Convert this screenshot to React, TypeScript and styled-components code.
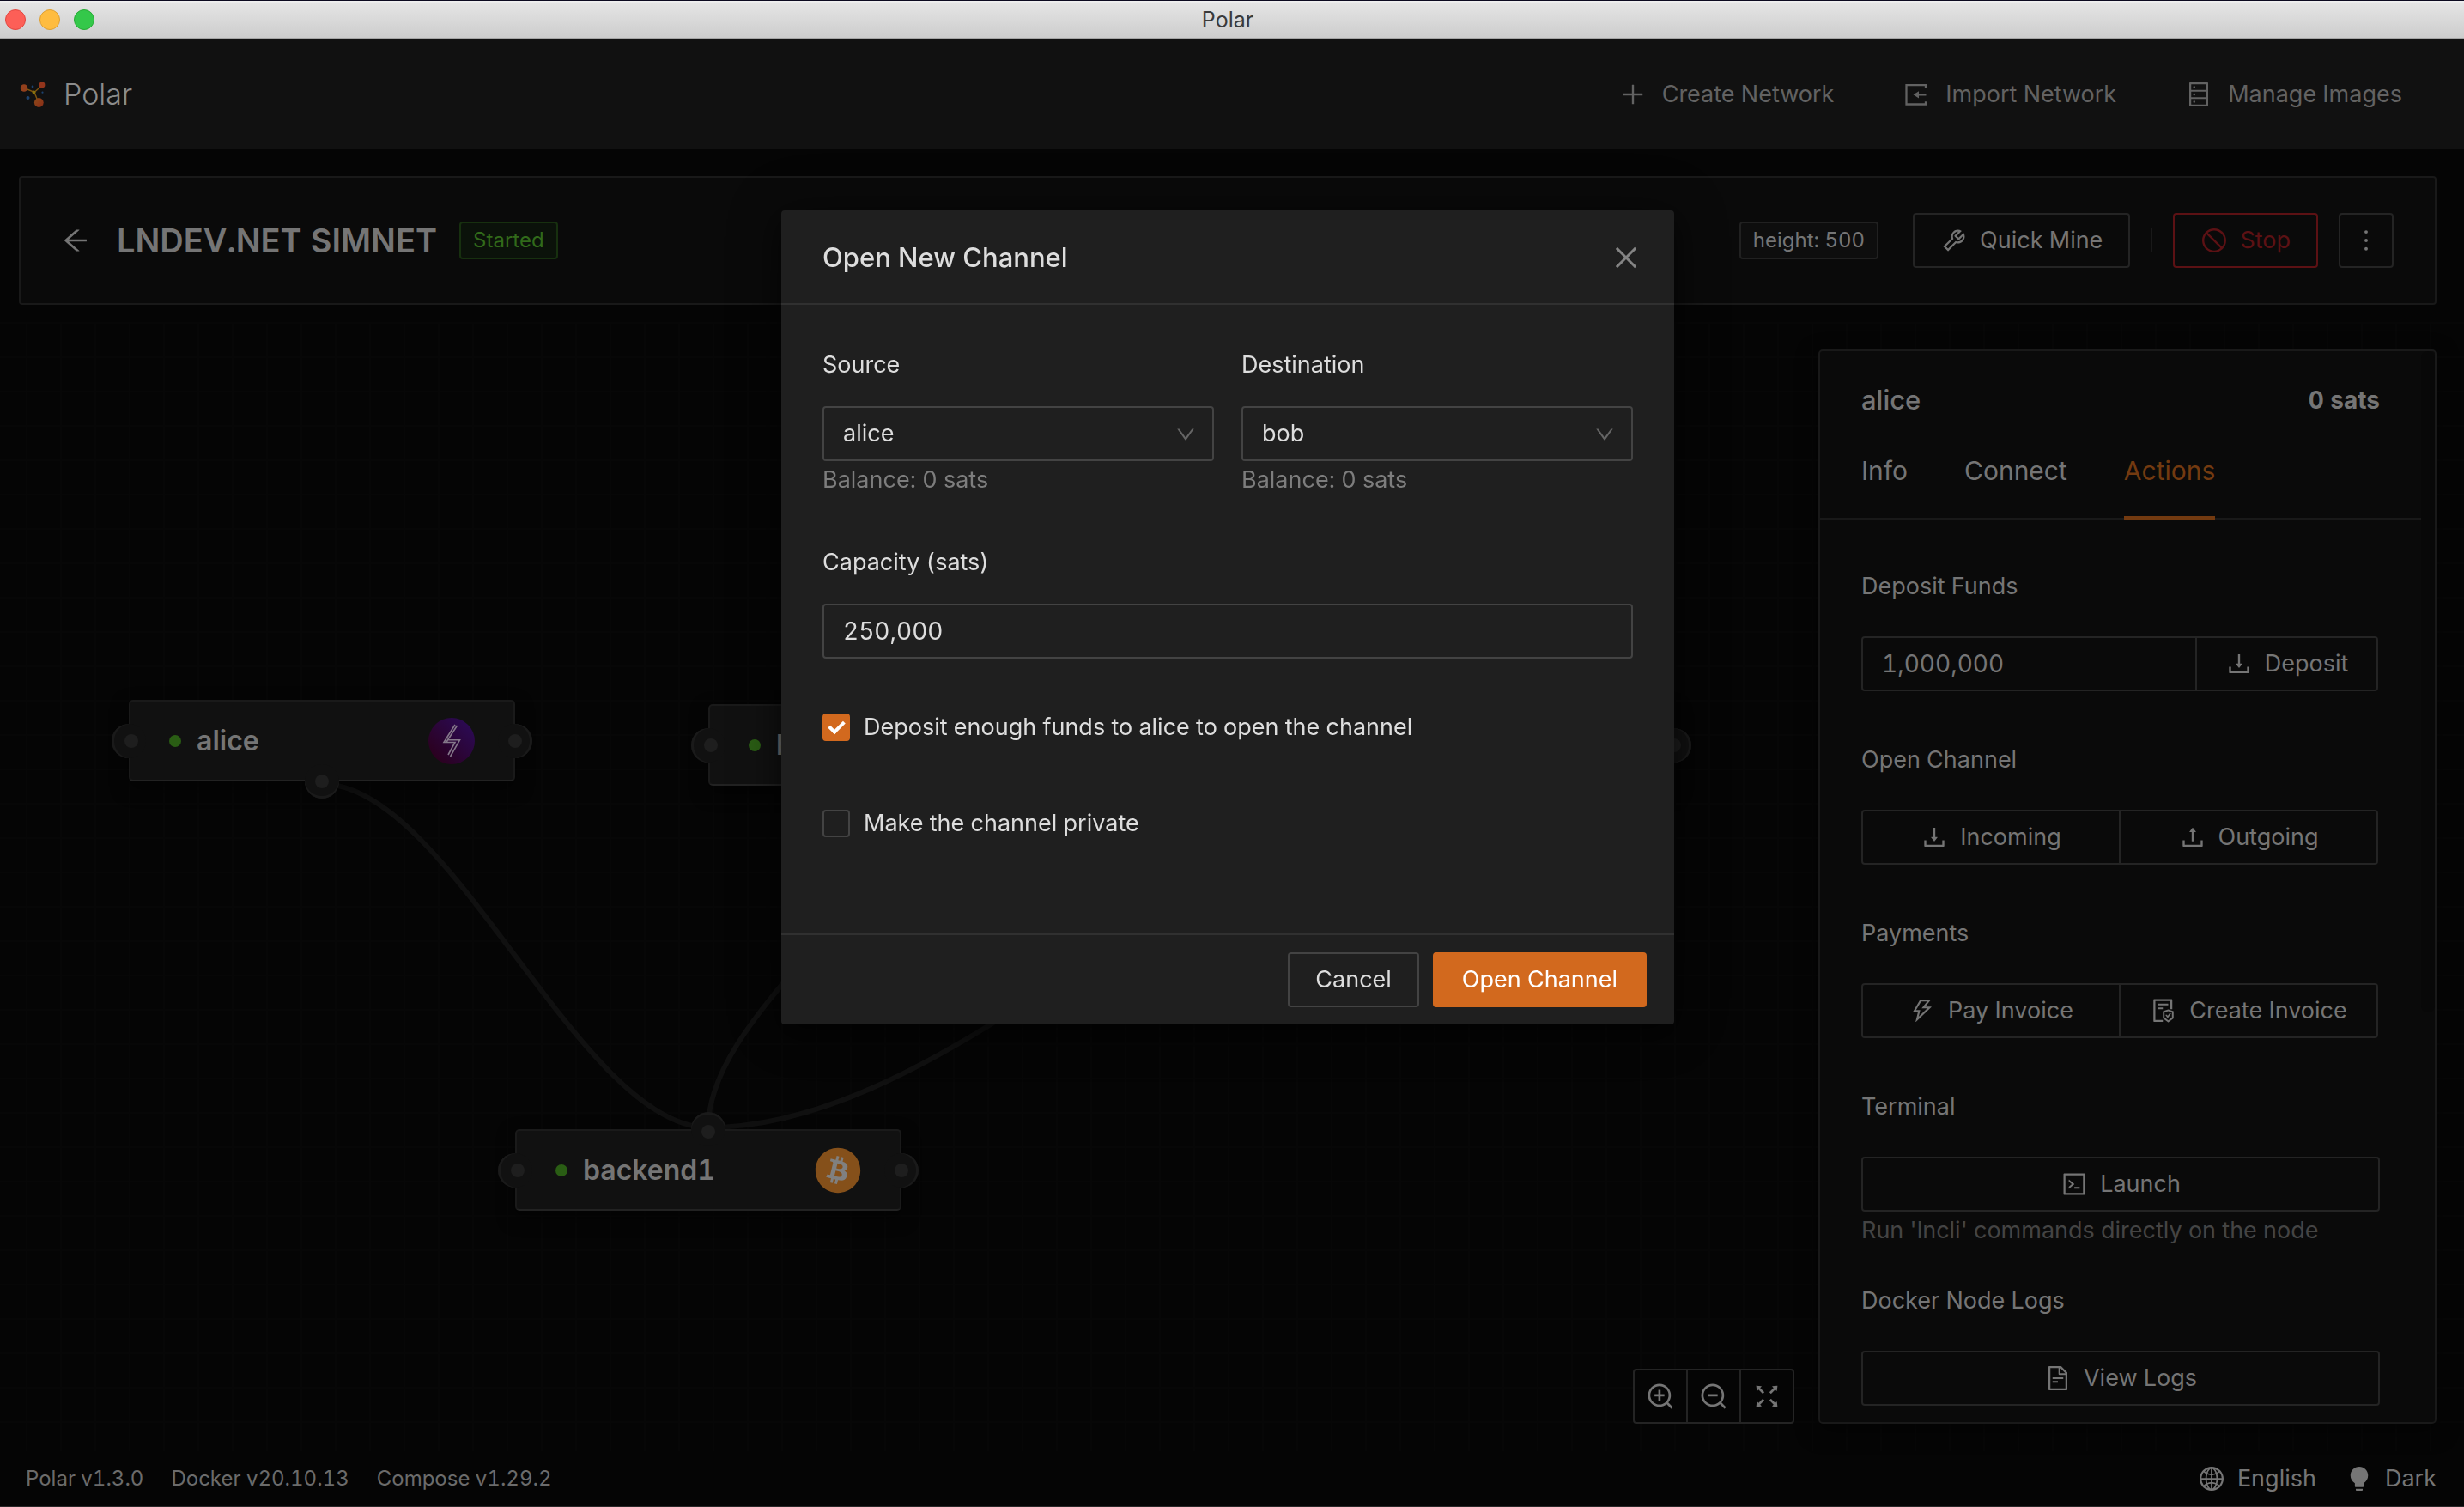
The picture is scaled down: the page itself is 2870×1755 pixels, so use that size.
import React from 'react';
import styled, { createGlobalStyle, css } from 'styled-components';
import {
  AiOutlinePlus, AiOutlineDatabase, AiOutlineArrowLeft, AiOutlineTool,
  AiOutlineStop, AiOutlineMore, AiOutlineDownload, AiOutlineUpload, AiOutlineThunderbolt,
  AiOutlineFileProtect, AiOutlineCode, AiOutlineFileText, AiOutlineZoomIn, AiOutlineZoomOut,
  AiOutlineFullscreen, AiOutlineGlobal, AiFillBulb, AiOutlineClose, AiOutlineDown,
} from 'react-icons/ai';
import { FaBitcoin } from 'react-icons/fa';

const c = {
  page: '#050505',
  bar: '#111111',
  card: '#0a0a0a',
  line: '#191919',
  control: '#242424',
  text: '#757575',
  muted: '#626262',
  faint: '#444444',
  primaryDim: '#733a10',
  primary: '#d2691e',
  danger: '#5c1114',
  modal: '#1f1f1f',
  modalLine: '#303030',
  modalControl: '#434343',
  modalText: '#dddddd',
};

const Global = createGlobalStyle`
  *, *::before, *::after { box-sizing: border-box; }
  body { margin: 0; background: ${c.page}; }
  body, button, input, select {
    font-family: Inter, "Liberation Sans", sans-serif;
    font-size: 27px;
    line-height: 44px;
    font-variant-numeric: tabular-nums;
  }
  h1, h2, h3, p { margin: 0; }
  svg { display: block; flex: none; }
`;

const Window = styled.div`
  display: flex;
  flex-direction: column;
  min-height: 100vh;
  color: ${c.text};
  background: ${c.page};
  border-bottom: 1px solid #2a2829;
`;

const TitleBar = styled.div`
  display: grid;
  grid-template-columns: 1fr auto 1fr;
  align-items: center;
  height: 45px;
  padding: 0 16px 0 6px;
  border-top: 1px solid #0c0a20;
  border-bottom: 1px solid #a5a5a5;
  background: linear-gradient(#f2f2f2, #e4e4e4 3px, #cdcdcd);
  color: #3a3a3a;
  font-size: 25px;
  line-height: 32px;
`;

const Lights = styled.div`
  display: flex;
  gap: 16px;
`;

const Light = styled.span<{ $fill: string; $edge: string }>`
  width: 24px;
  height: 24px;
  border-radius: 50%;
  background: ${p => p.$fill};
  border: 1px solid ${p => p.$edge};
`;

const AppBar = styled.header`
  display: flex;
  align-items: center;
  justify-content: space-between;
  height: 128px;
  padding: 2px 72px 0 22px;
  background: ${c.bar};
`;

const Brand = styled.a`
  display: flex;
  align-items: center;
  gap: 20px;
  color: #8c8c8c;
  font-size: 34px;
  font-weight: 300;
  text-decoration: none;
`;

const Menu = styled.nav`
  display: flex;
  gap: 80px;
`;

const MenuItem = styled.a`
  display: flex;
  align-items: center;
  gap: 18px;
  color: ${c.muted};
  text-decoration: none;
`;

const PageHeader = styled.section`
  display: flex;
  align-items: center;
  justify-content: space-between;
  height: 150px;
  margin: 32px 32px 20px 22px;
  padding: 0 48px 0 46px;
  border: 2px solid ${c.line};
  border-radius: 4px;
  background: ${c.card};
`;

const HeaderSide = styled.div`
  display: flex;
  align-items: center;
`;

const IconButton = styled.button`
  display: flex;
  padding: 0;
  border: 0;
  background: none;
  color: inherit;
`;

const NetworkName = styled.h1`
  margin: 0 26px 0 30px;
  font-size: 38px;
  font-weight: 600;
  line-height: 64px;
`;

const Tag = styled.span<{ $success?: boolean }>`
  padding: 0 14px;
  border: 2px solid ${p => (p.$success ? '#17300f' : '#212121')};
  border-radius: 4px;
  background: ${p => (p.$success ? '#0b120a' : '#0e0e0e')};
  color: ${p => (p.$success ? '#316a1a' : c.text)};
  font-size: 24px;
  line-height: 40px;
`;

const Divider = styled.span`
  width: 2px;
  height: 28px;
  margin: 0 24px;
  background: ${c.line};
`;

const Button = styled.button<{ $tone?: 'danger' | 'modal' | 'primary'; $square?: boolean }>`
  display: flex;
  align-items: center;
  justify-content: center;
  gap: 14px;
  height: 64px;
  padding: 0 30px;
  border: 2px solid ${c.control};
  border-radius: 4px;
  background: transparent;
  color: ${c.text};
  ${p => p.$square && css`
    width: 64px;
    padding: 0;
  `}
  ${p => p.$tone === 'danger' && css`
    border-color: ${c.danger};
    color: ${c.danger};
  `}
  ${p => p.$tone === 'modal' && css`
    border-color: ${c.modalControl};
    color: ${c.modalText};
  `}
  ${p => p.$tone === 'primary' && css`
    padding: 0 32px;
    border-color: ${c.primary};
    background: ${c.primary};
    color: #ffffff;
  `}
`;

const TagSlot = styled.div`
  display: flex;
  margin-right: 40px;
`;

const MoreSlot = styled.div`
  margin-left: 24px;
`;

const Workspace = styled.main`
  display: flex;
  flex: 1;
  background-image:
    linear-gradient(90deg, #070707 2px, transparent 2px),
    linear-gradient(#070707 2px, transparent 2px);
  background-size: 40px 40px;
  background-position: 30px 0;
`;

const Canvas = styled.div`
  position: relative;
  flex: 1;
`;

const Links = styled.svg`
  position: absolute;
  inset: 0;
  overflow: visible;
`;

const NodeCard = styled.div<{ $x: number; $y: number }>`
  position: absolute;
  left: ${p => p.$x}px;
  top: ${p => p.$y}px;
  display: flex;
  align-items: center;
  width: 450px;
  height: 95px;
  padding: 0 45px;
  border: 2px solid #1a1a1a;
  border-bottom-color: #222222;
  border-radius: 5px;
  background: ${c.bar};
  box-shadow: 0 8px 20px rgba(0, 0, 0, 0.5);
  font-size: 32px;
  font-weight: 600;
`;

const StatusDot = styled.span`
  width: 14px;
  height: 14px;
  margin-right: 18px;
  border-radius: 50%;
  background: #2a5d14;
`;

const NodeName = styled.span`
  flex: 1;
`;

const portSides = {
  left: css`left: -22px; top: 26px; padding-left: 6px; box-shadow: inset 3px 0 0 #1a1a1a;`,
  right: css`right: -22px; top: 26px; box-shadow: inset -3px 0 0 #1a1a1a;`,
  top: css`left: 203px; top: -22px; padding-top: 6px; box-shadow: inset 0 3px 0 #1a1a1a;`,
  bottom: css`left: 203px; bottom: -22px; box-shadow: inset 0 -3px 0 #1a1a1a;`,
};

const Port = styled.span<{ $side: keyof typeof portSides }>`
  position: absolute;
  display: grid;
  place-items: center;
  width: 40px;
  height: 40px;
  border-radius: 50%;
  background: ${c.bar};
  ${p => portSides[p.$side]}
  &::after {
    content: '';
    width: 16px;
    height: 16px;
    border-radius: 50%;
    background: #1e1e1e;
  }
`;

const BitcoinBadge = styled.span`
  display: grid;
  width: 54px;
  height: 54px;
  border-radius: 50%;
  background: radial-gradient(#808080 60%, transparent 61%);
  color: #85501a;
`;

const ZoomControls = styled.div`
  position: absolute;
  right: 28px;
  bottom: 32px;
  display: flex;
  background: ${c.page};
`;

const Sidebar = styled.aside`
  display: flex;
  width: 720px;
  margin: 32px 32px 32px 0;
  border: 2px solid ${c.line};
  border-radius: 5px;
  background: ${c.card};
  box-shadow: 0 8px 24px rgba(0, 0, 0, 0.5);
`;

const SidebarContent = styled.div`
  flex: 1;
  padding-top: 35px;
`;

const ScrollThumb = styled.div`
  width: 16px;
  height: 770px;
  border-radius: 8px;
  background: #080808;
`;

const SidebarTop = styled.div`
  display: flex;
  justify-content: space-between;
  padding: 0 48px;
`;

const SidebarTitle = styled.h2`
  font-size: 31px;
  font-weight: 500;
`;

const Balance = styled.strong`
  font-size: 28px;
`;

const Tabs = styled.div`
  display: flex;
  gap: 66px;
  margin-top: 38px;
  padding: 0 48px;
  border-bottom: 2px solid ${c.line};
`;

const Tab = styled.button<{ $active?: boolean }>`
  margin-bottom: -2px;
  padding: 0 0 31px;
  border: 0;
  border-bottom: 4px solid ${p => (p.$active ? c.primaryDim : 'transparent')};
  background: none;
  color: ${p => (p.$active ? c.primaryDim : c.text)};
  font-size: 30px;
`;

const Sections = styled.div`
  display: flex;
  flex-direction: column;
  gap: 58px;
  padding: 56px 48px 0;
`;

const Section = styled.section`
  display: flex;
  flex-direction: column;
`;

const SectionTitle = styled.h3`
  margin-bottom: 36px;
  font-size: 27px;
  font-weight: 400;
`;

const ButtonGroup = styled.div`
  display: flex;
  & > * {
    flex: 1;
  }
  & > * + * {
    margin-left: -2px;
    border-top-left-radius: 0;
    border-bottom-left-radius: 0;
  }
  & > :not(:last-child) {
    border-top-right-radius: 0;
    border-bottom-right-radius: 0;
  }
`;

const ActionGroup = styled(ButtonGroup)`
  margin-right: 2px;
`;

const SplitRow = styled(ActionGroup)`
  & > :last-child {
    flex: none;
    width: 213px;
  }
`;

const ZoomGroup = styled(ButtonGroup)`
  & > * {
    flex: none;
  }
`;

const TextInput = styled.input<{ $modal?: boolean }>`
  width: 100%;
  min-width: 0;
  height: 64px;
  padding: 0 22px;
  border: 2px solid ${p => (p.$modal ? c.modalControl : c.control)};
  border-radius: 4px;
  background: transparent;
  color: ${p => (p.$modal ? c.modalText : c.text)};
  font-size: 28px;
`;

const Hint = styled.p<{ $modal?: boolean }>`
  margin-bottom: ${p => (p.$modal ? 0 : '-20px')};
  color: ${p => (p.$modal ? '#7d7d7d' : c.faint)};
`;

const StatusBar = styled.footer`
  display: flex;
  align-items: center;
  justify-content: space-between;
  height: 64px;
  padding: 0 32px 0 30px;
  color: #6b6b6b;
`;

const Versions = styled.div`
  display: flex;
  gap: 32px;
  font-size: 24px;
`;

const Preferences = styled.div`
  display: flex;
  gap: 34px;
`;

const Preference = styled.button`
  display: flex;
  align-items: center;
  gap: 14px;
  padding: 0;
  border: 0;
  background: none;
  color: ${c.text};
`;

const Overlay = styled.div`
  position: fixed;
  inset: 0;
  display: flex;
  align-items: flex-start;
  justify-content: center;
  padding: 245px 10px 0 0;
`;

const Dialog = styled.form`
  width: 1040px;
  border-radius: 4px;
  background: ${c.modal};
  color: ${c.modalText};
  box-shadow: 0 12px 32px rgba(0, 0, 0, 0.5), 0 0 64px rgba(0, 0, 0, 0.3);
`;

const DialogHeader = styled.div`
  display: flex;
  align-items: center;
  justify-content: space-between;
  padding: 33px 38px 31px 48px;
  border-bottom: 2px solid ${c.modalLine};
`;

const DialogTitle = styled.h2`
  font-size: 31px;
  font-weight: 500;
`;

const CloseButton = styled(IconButton)`
  color: #848484;
`;

const DialogBody = styled.div`
  padding: 48px 48px 106px;
`;

const FieldRow = styled.div`
  display: grid;
  grid-template-columns: 1fr 1fr;
  gap: 32px;
  margin-bottom: 52px;
`;

const Field = styled.div`
  display: flex;
  flex-direction: column;
`;

const FieldLabel = styled.label`
  margin-bottom: 26px;
`;

const SelectBox = styled.div`
  position: relative;
  & > svg {
    position: absolute;
    right: 20px;
    top: 20px;
    color: #656565;
    pointer-events: none;
  }
`;

const Select = styled.select`
  width: 100%;
  height: 64px;
  padding: 0 22px;
  border: 2px solid ${c.modalControl};
  border-radius: 4px;
  appearance: none;
  background: transparent;
  color: ${c.modalText};
`;

const Checks = styled.div`
  display: flex;
  flex-direction: column;
  gap: 68px;
  margin-top: 58px;
`;

const CheckLabel = styled.label`
  display: flex;
  align-items: center;
  gap: 16px;
`;

const Checkbox = styled.input`
  display: grid;
  place-items: center;
  width: 32px;
  height: 32px;
  margin: 0;
  border: 2px solid ${c.modalControl};
  border-radius: 4px;
  appearance: none;
  &:checked {
    border-color: ${c.primary};
    background: ${c.primary};
  }
  &:checked::after {
    content: '';
    width: 11px;
    height: 18px;
    margin-top: -5px;
    border: solid #ffffff;
    border-width: 0 4px 4px 0;
    transform: rotate(45deg);
  }
`;

const DialogFooter = styled.div`
  display: flex;
  justify-content: flex-end;
  gap: 16px;
  padding: 20px 32px;
  border-top: 2px solid ${c.modalLine};
`;

const PolarLogo = () => (
  <svg width="32" height="32" viewBox="0 0 32 32" aria-hidden="true">
    <defs>
      <linearGradient id="ember" x1="0" y1="0" x2="1" y2="1">
        <stop offset="0" stopColor="#8a4a18" />
        <stop offset="1" stopColor="#8c2c18" />
      </linearGradient>
    </defs>
    <path d="M6 8.500L18 13.500L27.500 5M18 13.500L23 26" fill="none" stroke="#80560f" strokeWidth="1.400" />
    <circle cx="6" cy="8.500" r="4.300" fill="#93401c" />
    <circle cx="27" cy="5" r="3.400" fill="#93351c" />
    <circle cx="23.300" cy="25.500" r="5.400" fill="url(#ember)" />
    <circle cx="17.500" cy="13.500" r="2" fill="#86700f" />
    <circle cx="16" cy="7" r="1.400" fill="#1d4370" />
    <circle cx="10.500" cy="20" r="2" fill="#1d4370" />
    <circle cx="27.500" cy="13.700" r="1.100" fill="#1d4370" />
  </svg>
);

const ImportIcon = () => (
  <svg width="32" height="32" viewBox="0 0 32 32" aria-hidden="true">
    <path
      d="M27 8.500V5.200H4.500V27.500H27V24.200M16 16.300H27.500"
      fill="none"
      stroke="currentColor"
      strokeWidth="2.300"
    />
    <path d="M12.500 16.300L19 12.200V20.400Z" fill="currentColor" />
  </svg>
);

const LndLogo = () => (
  <svg width="54" height="54" viewBox="-27 -27 54 54" aria-hidden="true">
    <defs>
      <linearGradient id="lnd" x1="0" y1="1" x2="1" y2="0">
        <stop offset="0.100" stopColor="#2b001c" />
        <stop offset="0.900" stopColor="#2b0a55" />
      </linearGradient>
    </defs>
    <circle r="27" fill="url(#lnd)" />
    <path
      d="M4 -19L-9 1.500H4L-4 16M6.500 -18L-4.500 -1.200H9.500L-1.500 18M-4.500 -1.200L-6 1.500"
      fill="none"
      stroke="#85788a"
      strokeWidth="1.600"
    />
  </svg>
);

const networkNodes = [
  { id: 'alice', name: 'alice', x: 150, y: 440, ports: ['left', 'right', 'bottom'] as const },
  { id: 'bob', name: 'bob', x: 825, y: 445, ports: ['left', 'right', 'bottom'] as const },
  { id: 'peer', x: 1500, y: 445, ports: ['left', 'right', 'bottom'] as const },
  { id: 'backend', name: 'backend1', x: 600, y: 940, ports: ['left', 'right', 'top'] as const, bitcoin: true },
];

export default function App() {
  return (
    <>
      <Global />
      <Window>
        <TitleBar>
          <Lights>
            <Light $fill="#fd5f57" $edge="#e2463f" />
            <Light $fill="#febc40" $edge="#dea034" />
            <Light $fill="#34c84a" $edge="#27aa35" />
          </Lights>
          <span>Polar</span>
        </TitleBar>

        <AppBar>
          <Brand href="#"><PolarLogo />Polar</Brand>
          <Menu>
            <MenuItem href="#"><AiOutlinePlus size={32} />Create Network</MenuItem>
            <MenuItem href="#"><ImportIcon />Import Network</MenuItem>
            <MenuItem href="#"><AiOutlineDatabase size={32} />Manage Images</MenuItem>
          </Menu>
        </AppBar>

        <PageHeader>
          <HeaderSide>
            <IconButton aria-label="Back"><AiOutlineArrowLeft size={36} /></IconButton>
            <NetworkName>LNDEV.NET SIMNET</NetworkName>
            <Tag $success>Started</Tag>
          </HeaderSide>
          <HeaderSide>
            <TagSlot><Tag>height: 500</Tag></TagSlot>
            <Button><AiOutlineTool size={32} />Quick Mine</Button>
            <Divider />
            <Button $tone="danger"><AiOutlineStop size={32} />Stop</Button>
            <MoreSlot><Button $square aria-label="More"><AiOutlineMore size={36} /></Button></MoreSlot>
          </HeaderSide>
        </PageHeader>

        <Workspace>
          <Canvas>
            <Links width="100%" height="100%" aria-hidden="true">
              <g fill="none" stroke="#101010" strokeWidth="6">
                <path d="M375 538C525 538 675 938 825 938" />
                <path d="M1050 542C1050 674 825 806 825 938" />
                <path d="M825 938C1125 938 1425 542 1725 542" />
              </g>
            </Links>
            {networkNodes.map(n => (
              <NodeCard key={n.id} $x={n.x} $y={n.y}>
                <StatusDot />
                <NodeName>{n.name}</NodeName>
                {n.bitcoin ? <BitcoinBadge><FaBitcoin size={54} /></BitcoinBadge> : <LndLogo />}
                {n.ports.map(side => <Port key={side} $side={side} />)}
              </NodeCard>
            ))}
            <ZoomControls>
              <ZoomGroup>
                <Button $square aria-label="Zoom in"><AiOutlineZoomIn size={36} /></Button>
                <Button $square aria-label="Zoom out"><AiOutlineZoomOut size={36} /></Button>
                <Button $square aria-label="Fit to screen"><AiOutlineFullscreen size={36} /></Button>
              </ZoomGroup>
            </ZoomControls>
          </Canvas>

          <Sidebar>
            <SidebarContent>
              <SidebarTop>
                <SidebarTitle>alice</SidebarTitle>
                <Balance>0 sats</Balance>
              </SidebarTop>
              <Tabs>
                <Tab>Info</Tab>
                <Tab>Connect</Tab>
                <Tab $active>Actions</Tab>
              </Tabs>
              <Sections>
                <Section>
                  <SectionTitle><label htmlFor="deposit">Deposit Funds</label></SectionTitle>
                  <SplitRow>
                    <TextInput id="deposit" defaultValue="1,000,000" />
                    <Button><AiOutlineDownload size={32} />Deposit</Button>
                  </SplitRow>
                </Section>
                <Section>
                  <SectionTitle>Open Channel</SectionTitle>
                  <ActionGroup>
                    <Button><AiOutlineDownload size={32} />Incoming</Button>
                    <Button><AiOutlineUpload size={32} />Outgoing</Button>
                  </ActionGroup>
                </Section>
                <Section>
                  <SectionTitle>Payments</SectionTitle>
                  <ActionGroup>
                    <Button><AiOutlineThunderbolt size={32} />Pay Invoice</Button>
                    <Button><AiOutlineFileProtect size={32} />Create Invoice</Button>
                  </ActionGroup>
                </Section>
                <Section>
                  <SectionTitle>Terminal</SectionTitle>
                  <Button><AiOutlineCode size={32} />Launch</Button>
                  <Hint>Run 'lncli' commands directly on the node</Hint>
                </Section>
                <Section>
                  <SectionTitle>Docker Node Logs</SectionTitle>
                  <Button><AiOutlineFileText size={32} />View Logs</Button>
                </Section>
              </Sections>
            </SidebarContent>
            <ScrollThumb />
          </Sidebar>
        </Workspace>

        <StatusBar>
          <Versions>
            <span>Polar v1.3.0</span>
            <span>Docker v20.10.13</span>
            <span>Compose v1.29.2</span>
          </Versions>
          <Preferences>
            <Preference><AiOutlineGlobal size={32} />English</Preference>
            <Preference><AiFillBulb size={32} />Dark</Preference>
          </Preferences>
        </StatusBar>
      </Window>

      <Overlay>
        <Dialog role="dialog" aria-labelledby="dialog-title">
          <DialogHeader>
            <DialogTitle id="dialog-title">Open New Channel</DialogTitle>
            <CloseButton type="button" aria-label="Close"><AiOutlineClose size={36} /></CloseButton>
          </DialogHeader>
          <DialogBody>
            <FieldRow>
              <Field>
                <FieldLabel htmlFor="source">Source</FieldLabel>
                <SelectBox>
                  <Select id="source" defaultValue="alice"><option>alice</option></Select>
                  <AiOutlineDown size={26} />
                </SelectBox>
                <Hint $modal>Balance: 0 sats</Hint>
              </Field>
              <Field>
                <FieldLabel htmlFor="destination">Destination</FieldLabel>
                <SelectBox>
                  <Select id="destination" defaultValue="bob"><option>bob</option></Select>
                  <AiOutlineDown size={26} />
                </SelectBox>
                <Hint $modal>Balance: 0 sats</Hint>
              </Field>
            </FieldRow>
            <Field>
              <FieldLabel htmlFor="capacity">Capacity (sats)</FieldLabel>
              <TextInput $modal id="capacity" defaultValue="250,000" />
            </Field>
            <Checks>
              <CheckLabel>
                <Checkbox type="checkbox" defaultChecked />
                Deposit enough funds to alice to open the channel
              </CheckLabel>
              <CheckLabel>
                <Checkbox type="checkbox" />
                Make the channel private
              </CheckLabel>
            </Checks>
          </DialogBody>
          <DialogFooter>
            <Button type="button" $tone="modal">Cancel</Button>
            <Button type="button" $tone="primary">Open Channel</Button>
          </DialogFooter>
        </Dialog>
      </Overlay>
    </>
  );
}
